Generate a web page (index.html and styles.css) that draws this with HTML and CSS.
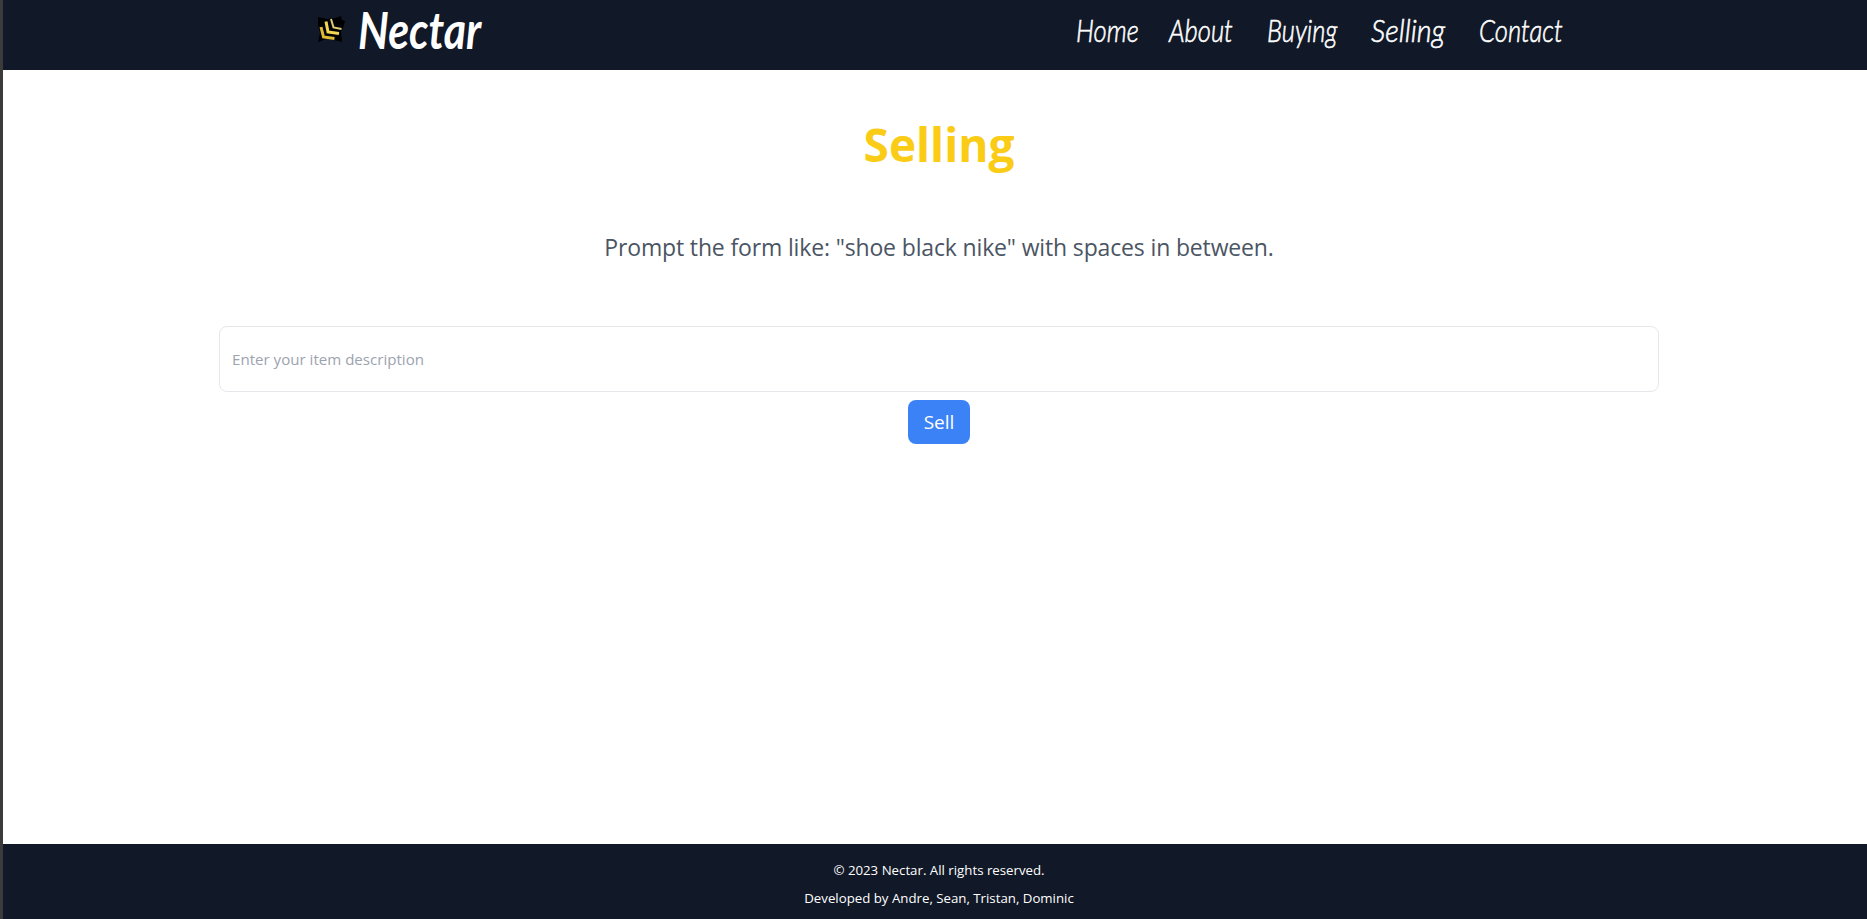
FILE: index.html
```html
<!DOCTYPE html>
<html lang="en">
<head>
  <meta charset="UTF-8" />
  <meta name="viewport" content="width=device-width, initial-scale=1" />
  <title>Nectar</title>
  <link rel="stylesheet" href="styles.css">
</head>
<body>

  <header class="header">
    <div class="header-inner">
      <a href="#" class="brand">
        <svg class="logo" width="28" height="28" viewBox="0 0 28 28">
          <path fill="#000" d="M1 1l9 2 8-1 6-2 1 4 3 1-2 7-2 3 1 11-8-2-8-1-8 3 2-9-2-8z" />
          <g fill="none" stroke-width="3">
            <path stroke="#dcb936" d="M4 11l2.500 10 11 1.500" />
            <path stroke="#f4d653" d="M9 5.500l2 10.500 11 1.500" />
            <path stroke="#dfcc78" stroke-width="2" d="M14 3l2.500 8.500 8 1.500" />
          </g>
        </svg>
        <span class="brand-name">Nectar</span>
      </a>
      <nav class="nav">
        <a href="#" class="home"><span>Home</span></a>
        <a href="#" class="about"><span>About</span></a>
        <a href="#" class="buying"><span>Buying</span></a>
        <a href="#" class="selling"><span>Selling</span></a>
        <a href="#" class="contact"><span>Contact</span></a>
      </nav>
    </div>
  </header>

  <main class="main">
    <h1>Selling</h1>
    <p class="hint">Prompt the form like: "shoe black nike" with spaces in between.</p>
    <form class="sell-form">
      <input type="text" placeholder="Enter your item description" />
      <button type="submit">Sell</button>
    </form>
  </main>

  <footer class="footer">
    <p class="copyright">&copy; 2023 Nectar. All rights reserved.</p>
    <p class="credits">Developed by Andre, Sean, Tristan, Dominic</p>
  </footer>

</body>
</html>
```
FILE: styles.css
```css
* {
  margin: 0;
  padding: 0;
  box-sizing: border-box;
}

body {
  font-family: "Segoe UI", "Open Sans", sans-serif;
  min-height: 100vh;
  display: flex;
  flex-direction: column;
  background: #fff;
  border-left: 3px solid #3b3b3b;
}

a {
  color: inherit;
  text-decoration: none;
}

/* Header */
.header {
  height: 70px;
  padding-left: 8px;
  background: #111827;
  color: #fff;
  font-family: "Lato", sans-serif;
  font-style: italic;
}

.header-inner {
  display: flex;
  justify-content: space-between;
  width: 1248px;
  margin: 0 auto;
}

.brand {
  display: flex;
  align-items: center;
  height: 60px;
  padding-left: 2px;
}

.brand-name {
  margin-left: 13px;
  padding-bottom: 2px;
  font-size: 52px;
  font-weight: 700;
  line-height: 58px;
  transform: scaleX(0.825);
  transform-origin: left center;
}

.nav {
  display: flex;
  gap: 32px;
  font-size: 32px;
  font-weight: 300;
  line-height: 60px;
  -webkit-text-stroke: 0.6px #fff;
}

.nav a span {
  display: block;
  transform: scaleX(0.8);
  transform-origin: left center;
}

.home { width: 61px; }
.about { width: 66px; }
.buying { width: 72px; }
.selling { width: 76px; }
.contact { width: 84px; }

.nav .selling span {
  transform: scaleX(0.9);
}

/* Content */
.main {
  flex: 1;
  width: 1448px;
  margin: 0 auto;
  padding-left: 8px;
  text-align: center;
}

h1 {
  margin-top: 50px;
  font-size: 46px;
  line-height: 48px;
  font-weight: 700;
  color: #facc15;
}

.hint {
  margin-top: 63px;
  font-size: 23px;
  line-height: 32px;
  letter-spacing: -0.15px;
  color: #4b5563;
}

.sell-form {
  display: flex;
  flex-direction: column;
  align-items: center;
  margin-top: 63px;
}

input {
  width: 100%;
  height: 66px;
  padding: 0 12px;
  border: 1px solid #e5e7eb;
  border-radius: 8px;
  font-family: inherit;
  font-size: 15.1px;
}

input::placeholder {
  color: #9ca3af;
}

button {
  width: 62px;
  height: 44px;
  margin-top: 8px;
  border: none;
  border-radius: 8px;
  background: #3b82f6;
  color: #fff;
  font-family: inherit;
  font-size: 19px;
}

/* Footer */
.footer {
  height: 75px;
  padding: 16px 0 0 8px;
  background: #111827;
  color: #fff;
  font-size: 13.25px;
  line-height: 20px;
  text-align: center;
}

.credits {
  margin-top: 8px;
}
```
